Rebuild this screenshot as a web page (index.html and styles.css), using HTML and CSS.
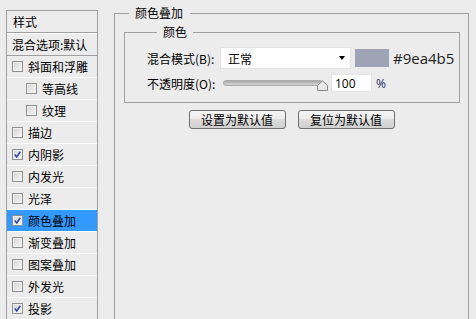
FILE: index.html
```html
<!DOCTYPE html>
<html lang="zh-CN">
<head>
    <meta charset="UTF-8">
    <title>图层样式 - 颜色叠加</title>
    <link rel="stylesheet" href="styles.css">
</head>
<body>
    <div class="dialog">
        <div class="styles-panel">
            <div class="panel-head">样式</div>
            <div class="panel-head second">混合选项:默认</div>
            <ul class="fx-list">
                <li class="fx"><span class="check"></span>斜面和浮雕</li>
                <li class="fx sub"><span class="check"></span>等高线</li>
                <li class="fx sub"><span class="check"></span>纹理</li>
                <li class="fx"><span class="check"></span>描边</li>
                <li class="fx"><span class="check on"><svg viewBox="0 0 9 9"><path d="M1.8 4.6l1.9 2.3 3.6-5.2"/></svg></span>内阴影</li>
                <li class="fx"><span class="check"></span>内发光</li>
                <li class="fx"><span class="check"></span>光泽</li>
                <li class="fx active"><span class="check on"><svg viewBox="0 0 9 9"><path d="M1.8 4.6l1.9 2.3 3.6-5.2"/></svg></span>颜色叠加</li>
                <li class="fx"><span class="check"></span>渐变叠加</li>
                <li class="fx"><span class="check"></span>图案叠加</li>
                <li class="fx"><span class="check"></span>外发光</li>
                <li class="fx"><span class="check on"><svg viewBox="0 0 9 9"><path d="M1.8 4.6l1.9 2.3 3.6-5.2"/></svg></span>投影</li>
            </ul>
        </div>

        <fieldset class="group outer">
            <legend>颜色叠加</legend>
            <fieldset class="group inner">
                <legend>颜色</legend>
                <div class="row">
                    <span class="label">混合模式(B):</span>
                    <div class="select">
                        <span>正常</span>
                        <span class="arrow"></span>
                    </div>
                    <span class="swatch"></span>
                    <span class="hex">#9ea4b5</span>
                </div>
                <div class="row">
                    <span class="label">不透明度(O):</span>
                    <div class="slider">
                        <span class="track"></span>
                        <svg class="thumb" viewBox="0 0 11 11"><path d="M0.5 10.5V5.5L5.5 0.8 10.5 5.5V10.5Z"/></svg>
                    </div>
                    <span class="num">100</span>
                    <span class="unit">%</span>
                </div>
            </fieldset>
            <div class="buttons">
                <button>设置为默认值</button>
                <button>复位为默认值</button>
            </div>
        </fieldset>
    </div>
</body>
</html>
```

FILE: styles.css
```css
body {
    margin: 0;
    background-color: #ececec;
    color: #000;
    font-family: 'Noto Sans CJK SC', sans-serif;
    font-size: 12px;
    overflow: hidden;
}
.dialog {
    display: flex;
    align-items: flex-start;
    height: 319px;
    overflow: hidden;
}
.styles-panel {
    margin: 10px 0 0 6px;
    width: 90px;
    height: 330px;
    border: 1px solid #a0a0a0;
    border-bottom: none;
}
.panel-head {
    height: 21px;
    line-height: 21px;
    padding-left: 6px;
    border-bottom: 1px solid #a0a0a0;
}
.panel-head.second {
    border-top: 1px solid #ffffff;
    padding-left: 5px;
}
.fx-list {
    list-style: none;
    margin: 0;
    padding: 0;
}
.fx {
    display: flex;
    align-items: center;
    height: 21px;
    border-bottom: 1px solid #ffffff;
    padding-left: 5px;
}
.fx.sub {
    padding-left: 19px;
}
.fx.active {
    background-color: #3399ff;
}
.check {
    display: flex;
    align-items: center;
    justify-content: center;
    width: 9px;
    height: 9px;
    margin-right: 5px;
    border: 1px solid #8e8f8f;
    background: linear-gradient(135deg, #d4d4d4, #f6f6f6);
    box-shadow: inset 0 0 0 1px #f1f1f1;
}
.check svg {
    width: 9px;
    height: 9px;
}
.check path {
    fill: none;
    stroke: #2d48a6;
    stroke-width: 1.6;
}
.group {
    margin: 0;
    padding: 0;
    border: 1px solid #a0a0a0;
}
.group legend {
    line-height: 16px;
}
.outer {
    margin: 5px 0 0 16px;
    width: 353px;
    height: 330px;
    border-bottom: none;
}
.outer > legend {
    margin-left: 14px;
    padding: 0 7px 0 6px;
}
.inner {
    margin: 3px 8px 0 9px;
    padding: 7px 0 8px 22px;
}
.inner > legend {
    margin-left: 10px;
    padding: 0 6px;
}
.row {
    display: flex;
    align-items: center;
    height: 22px;
}
.row + .row {
    margin-top: 3px;
}
.label {
    width: 73px;
}
.select {
    display: flex;
    align-items: center;
    justify-content: space-between;
    box-sizing: border-box;
    width: 131px;
    height: 22px;
    padding: 0 5px 0 7px;
    background-color: #fff;
    border: 1px solid #e3e3e3;
}
.arrow {
    width: 0;
    height: 0;
    border-left: 3.5px solid transparent;
    border-right: 3.5px solid transparent;
    border-top: 4px solid #000;
}
.swatch {
    width: 34px;
    height: 18px;
    margin-left: 4px;
    background-color: #9ea4b5;
}
.hex {
    margin-left: 4px;
    font-family: 'Open Sans', sans-serif;
    font-size: 15px;
    color: #222;
}
.slider {
    display: flex;
    align-items: center;
    width: 105px;
    margin-left: 3px;
}
.track {
    flex: 1;
    height: 4px;
    border-radius: 3px;
    background: linear-gradient(#a8a8a8, #d6d6d6);
    border: 1px solid #a9a9a9;
}
.thumb {
    width: 11px;
    height: 11px;
    margin: 5px 0 0 -6px;
}
.thumb path {
    fill: #e9e9e9;
    stroke: #8a8a8a;
}
.num {
    box-sizing: border-box;
    width: 41px;
    height: 18px;
    line-height: 17px;
    margin-left: 3px;
    padding-left: 3px;
    background-color: #fff;
    border: 1px solid #e3e3e3;
    font-family: 'Open Sans', sans-serif;
    font-size: 12px;
}
.unit {
    margin-left: 4px;
    font-family: 'Open Sans', sans-serif;
    color: #1a2a6a;
}
.buttons {
    display: flex;
    justify-content: center;
    gap: 12px;
    margin-top: 7px;
}
button {
    width: 97px;
    height: 19px;
    padding: 0;
    font-family: 'Noto Sans CJK SC', sans-serif;
    font-size: 12px;
    line-height: 17px;
    color: #000;
    border: 1px solid #707070;
    border-radius: 3px;
    background: linear-gradient(#f4f4f4, #ececec 50%, #dddddd 50%, #cfcfcf);
}
```
